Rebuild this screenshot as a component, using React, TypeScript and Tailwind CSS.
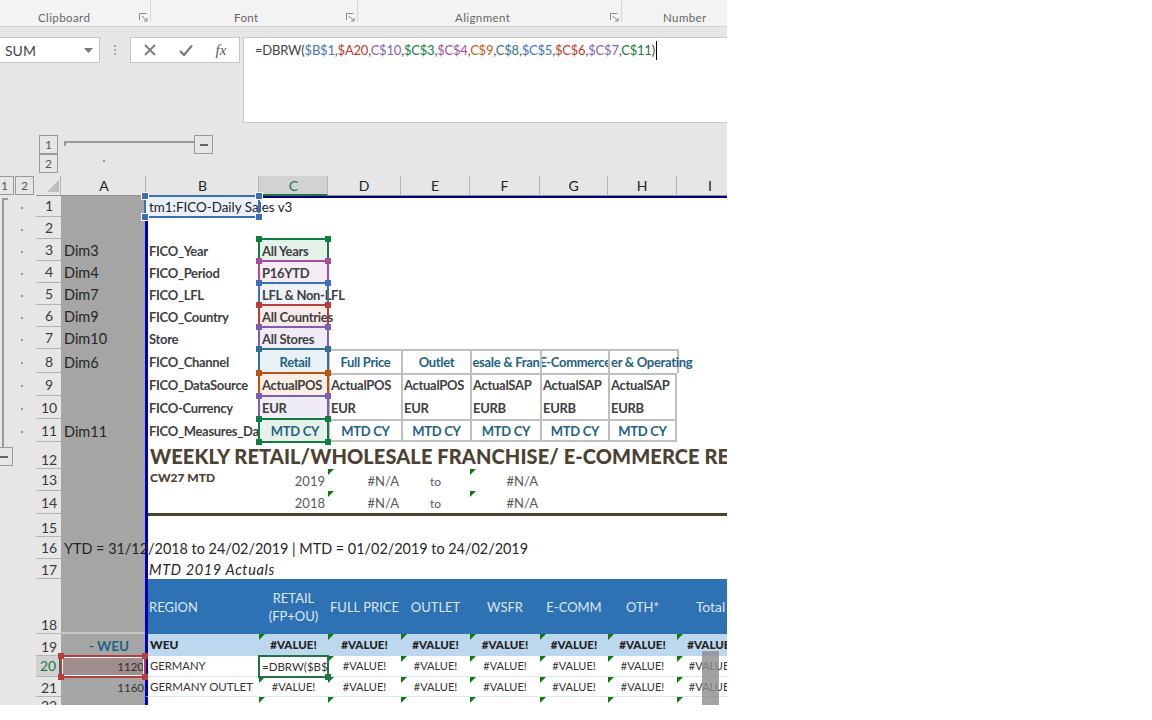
import React from "react";

const cal = "font-['Lato','Liberation_Sans',sans-serif]";
const goth = "font-['Lato','Liberation_Sans',sans-serif]";

function Sel({ border, handle, white }: { border: string; handle: string; white?: boolean }) {
  return (
    <div className={`pointer-events-none absolute -inset-[1px] z-20 border-2 ${border}`}>
      {white ? <span className="absolute inset-0 border border-white" /> : null}
      <span className={`absolute -left-[4px] -top-[4px] h-[6px] w-[6px] ${handle}`} />
      <span className={`absolute -right-[4px] -top-[4px] h-[6px] w-[6px] ${handle}`} />
      <span className={`absolute -bottom-[4px] -left-[4px] h-[6px] w-[6px] ${handle}`} />
      <span className={`absolute -bottom-[4px] -right-[4px] h-[6px] w-[6px] ${handle}`} />
    </div>
  );
}

function Tri() {
  return <svg className="absolute left-0 top-0 z-10" width="6" height="6"><path d="M0 0H6L0 6Z" fill="#0f7b0f" /></svg>;
}

function Launcher({ className }: { className?: string }) {
  return (
    <svg className={className} width="9" height="9" viewBox="0 0 9 9" fill="none">
      <path d="M0.5 7V0.5H7.5" stroke="#8a8a8a" />
      <path d="M3 3L7.5 7.5M5 8H8V5" stroke="#8a8a8a" />
    </svg>
  );
}

const RowNum = ({ n, active, low }: { n: number; active?: boolean; low?: boolean }) => (
  <div className={`flex items-end justify-center border-b border-[#b4b4b4] pl-[1px] text-[14px] ${low ? "leading-[16px]" : "pb-[1px] leading-[18px]"} ${active ? "border-r-2 border-r-[#217346] bg-[#d2d2d2] text-[#217346]" : "text-[#3c3c3c]"}`}>
    {n}
  </div>
);

const ColHead = ({ t, active, className = "" }: { t: string; active?: boolean; className?: string }) => (
  <div className={`flex items-center justify-center border-r border-[#b4b4b4] text-[14px] ${active ? "border-b-2 border-b-[#217346] bg-[#d2d2d2] text-[#217346]" : "border-b border-b-[#8f8f8f] text-[#222]"} ${className}`}>
    {t}
  </div>
);

const ACell = ({ t, className = "" }: { t?: string; className?: string }) => (
  <div className={`flex items-end overflow-visible whitespace-nowrap bg-[#a5a5a5] pl-[3px] text-[14.5px] leading-[20px] text-[#262626] ${goth} ${className}`}>{t}</div>
);

const BCell = ({ t, up, clip }: { t?: string; up?: boolean; clip?: boolean }) => (
  <div className={`flex items-end whitespace-nowrap border-l-[3px] border-[#0000bf] bg-white pl-[1px] text-[13px] font-bold leading-[18px] tracking-[-0.3px] text-[#404040] ${up ? "pb-[2px]" : "pb-[1px]"} ${clip ? "overflow-hidden" : ""} ${cal}`}>{t}</div>
);

const Blank = ({ className = "" }: { className?: string }) => <div className={`bg-white ${className}`} />;

const Input = ({ t, bg, border, handle, center, up }: { t: string; bg: string; border: string; handle: string; center?: boolean; up?: boolean }) => (
  <div className={`relative flex items-end overflow-visible whitespace-nowrap pl-[3px] text-[13px] font-bold leading-[18px] tracking-[-0.3px] ${up ? "pb-[2px]" : "pb-[1px]"} ${bg} ${cal} ${center ? "justify-center pl-0 text-[#1f6285]" : "text-[#404040]"}`}>
    {t}
    <Sel border={border} handle={handle} />
  </div>
);

const Head = ({ t, right, bottom }: { t: string; right?: boolean; bottom?: boolean }) => (
  <div className={`flex items-end justify-center overflow-hidden whitespace-nowrap border-t-2 border-l-2 border-[#bfbfbf] bg-white text-[13px] font-bold leading-[18px] tracking-[-0.3px] text-[#1f6285] ${bottom ? "border-b-2 pb-0" : "pb-[2px]"} ${cal} ${right ? "border-r-2" : ""}`}>
    {t}
  </div>
);

const Val = ({ t, r2, top }: { t: string; r2?: boolean; top?: boolean }) => (
  <div className={`flex items-end whitespace-nowrap border-l-2 border-[#bfbfbf] bg-white pb-[2px] pl-[1px] text-[13px] font-bold leading-[18px] tracking-[-0.3px] text-[#404040] ${cal} ${r2 ? "border-r-2" : ""} ${top ? "border-t-2" : ""}`}>{t}</div>
);

const Num = ({ t, bold, className = "" }: { t: string; bold?: boolean; className?: string }) => (
  <div className={`relative flex h-full items-center justify-center overflow-hidden whitespace-nowrap ${goth} ${bold ? "text-[11.5px] font-black text-[#222]" : "text-[11px] text-[#333]"} ${className}`}>
    <Tri />
    {t}
  </div>
);

const Small = ({ t, w, className = "" }: { t: string; w?: boolean; className?: string }) => (
  <div className={`relative flex items-end bg-white text-[13px] leading-[18px] text-[#595959] ${goth} ${className}`}>
    {w ? <Tri /> : null}
    {t}
  </div>
);

const Formula = () => {
  const parts: [string, string][] = [
    ["=DBRW(", "text-[#444]"], ["$B$1", "text-[#4472c4]"], [",", "text-[#444]"], ["$A20", "text-[#c0392b]"], [",", "text-[#444]"],
    ["C$10", "text-[#8064b4]"], [",", "text-[#444]"], ["$C$3", "text-[#107c41]"], [",", "text-[#444]"], ["$C$4", "text-[#a64d9e]"], [",", "text-[#444]"],
    ["C$9", "text-[#c55a11]"], [",", "text-[#444]"], ["C$8", "text-[#31708f]"], [",", "text-[#444]"], ["$C$5", "text-[#4472c4]"], [",", "text-[#444]"],
    ["$C$6", "text-[#c0392b]"], [",", "text-[#444]"], ["$C$7", "text-[#8064b4]"], [",", "text-[#444]"], ["C$11", "text-[#107c41]"], [")", "text-[#444]"],
  ];
  return (
    <span className="whitespace-nowrap">
      {parts.map(([t, c], i) => (
        <span key={i} className={c}>{t}</span>
      ))}
    </span>
  );
};

const OutBox = ({ t, className = "" }: { t: string; className?: string }) => (
  <div className={`flex h-[19px] w-[19px] items-center justify-center border border-[#9a9a9a] text-[12px] text-[#555] ${className}`}>{t}</div>
);

const Minus = ({ className = "" }: { className?: string }) => (
  <div className={`flex h-[19px] w-[19px] items-center justify-center border border-[#9a9a9a] ${className}`}>
    <span className="h-[2px] w-[8px] bg-[#666]" />
  </div>
);

const Group = ({ label, w, pad, launcher }: { label: string; w: string; pad: string; launcher?: boolean }) => (
  <div className={`relative flex h-[26px] items-end justify-start ${w} ${pad}`}>
    {label}
    {launcher ? <Launcher className="absolute bottom-[4px] right-[3px]" /> : null}
    {launcher ? <span className="absolute right-0 top-0 h-[22px] w-[1px] bg-[#d8d8d8]" /> : null}
  </div>
);

export default function App() {
  return (
    <div className={`h-[720px] w-[1152px] overflow-hidden bg-white ${cal}`}>
      <div className="flex h-[705px] w-[727px] flex-col overflow-hidden bg-[#e6e6e6]">
        {/* Ribbon */}
        <div className="flex h-[27px] shrink-0 border-b border-[#d0d0d0] bg-[#f3f3f3] text-[11.5px] leading-[16px] tracking-[0.4px] text-[#666]">
          <Group label="Clipboard" w="w-[151px]" pad="pl-[38px]" launcher />
          <Group label="Font" w="w-[207px]" pad="pl-[83px]" launcher />
          <Group label="Alignment" w="w-[264px]" pad="pl-[97px]" launcher />
          <Group label="Number" w="flex-1" pad="pl-[41px]" />
        </div>

        {/* Formula bar */}
        <div className="flex h-[96px] shrink-0 items-start pt-[10px]">
          <div className="flex h-[26px] w-[100px] items-center justify-between border border-l-0 border-[#c6c6c6] bg-white pl-[5px] pr-[6px] text-[14px] text-[#444]">
            SUM
            <svg width="9" height="5"><path d="M0 0H9L4.5 5Z" fill="#777" /></svg>
          </div>
          <div className="flex h-[26px] w-[30px] flex-col items-center justify-center gap-[2px]">
            <span className="h-[2px] w-[2px] bg-[#aaa]" />
            <span className="h-[2px] w-[2px] bg-[#aaa]" />
            <span className="h-[2px] w-[2px] bg-[#aaa]" />
          </div>
          <div className="flex h-[26px] w-[110px] items-center justify-around border border-[#c6c6c6] bg-white px-[1px]">
            <svg width="12" height="12" viewBox="0 0 12 12"><path d="M1 1L11 11M11 1L1 11" stroke="#7a7a7a" strokeWidth="1.8" /></svg>
            <svg width="14" height="12" viewBox="0 0 14 12"><path d="M1 7L5 11L13 1.5" stroke="#7a7a7a" strokeWidth="2.2" fill="none" /></svg>
            <span className="font-['Liberation_Serif',serif] text-[15px] italic text-[#555]">fx</span>
          </div>
          <div className="ml-[3px] h-[86px] flex-1 border border-r-0 border-[#c6c6c6] bg-white pl-[11px] text-[13px] tracking-[-0.2px]">
            <div className="flex h-[25px] items-center">
              <Formula />
              <span className="ml-[1px] h-[19px] w-[1px] bg-black" />
            </div>
          </div>
        </div>

        {/* Column outline */}
        <div className="relative flex h-[53px] shrink-0 items-start pl-[39px] pt-[12px]">
          <div className="flex flex-col gap-0">
            <OutBox t="1" />
            <OutBox t="2" />
          </div>
          <div className="ml-[6px] mt-[6px] h-[5px] w-[130px] border-l-2 border-t-2 border-[#9a9a9a]" />
          <Minus className="bg-[#e6e6e6]" />
          <span className="absolute left-[103px] top-[37px] h-[2px] w-[2px] bg-[#999]" />
        </div>

        {/* Sheet */}
        <div className="flex min-h-0 flex-1">
          {/* Row outline gutter */}
          <div className="relative w-[36px] shrink-0">
            <div className="flex h-[20px] items-start">
              <OutBox t="1" className="-ml-[5px] h-[18px]" />
              <OutBox t="2" className="ml-[1px] h-[18px] w-[18px]" />
            </div>
            <div className="absolute left-[2px] top-[22px] h-[249px] w-[6px] border-l-2 border-t-2 border-[#9a9a9a]" />
            <Minus className="absolute -left-[6px] top-[271px] bg-[#e6e6e6]" />
            {[31, 53, 75, 97, 119, 141, 163, 186, 209, 232, 255].map((y) => (
              <span key={y} className="absolute left-[21px] h-[2px] w-[2px] bg-[#999]" style={{ top: y }} />
            ))}
          </div>

          {/* Grid */}
          <div className="relative grid flex-1 grid-cols-[25px_84px_114px_69px_73px_69px_70px_68px_69px_67px] grid-rows-[20px_21px_22px_22px_22px_22px_22px_22px_24px_23px_23px_23px_27px_22px_23px_23px_22px_20px_55px_22px_21px_20px_8px] overflow-hidden">
            {/* Column headers */}
            <div className="relative border-b border-[#8f8f8f] border-r border-r-[#b4b4b4]">
              <svg className="absolute bottom-[3px] right-[1px]" width="12" height="12"><path d="M12 0V12H0Z" fill="#bdbdbd" /></svg>
            </div>
            <ColHead t="A" className="-mr-[1px] pl-[2px]" />
            <ColHead t="B" className="pl-[2px]" />
            <ColHead t="C" active className="pl-[1px]" />
            <ColHead t="D" />
            <ColHead t="E" />
            <ColHead t="F" />
            <ColHead t="G" />
            <ColHead t="H" />
            <ColHead t="I" />

            {/* 1 */}
            <RowNum n={1} />
            <ACell />
            <div className={`relative z-10 flex items-center whitespace-nowrap bg-[#e9f0fa] pl-[4px] text-[13.4px] leading-[18px] text-[#222] ${cal}`}>
              tm1:FICO-Daily Sales v3
              <Sel border="border-[#3c6eb4]" handle="bg-[#3c6eb4] outline outline-1 outline-white" />
            </div>
            <Blank className="col-span-7 border-t-2 border-[#000080]" />

            {/* 2 */}
            <RowNum n={2} />
            <ACell />
            <BCell />
            <Blank className="col-span-7" />

            {/* 3 */}
            <RowNum n={3} />
            <ACell t="Dim3" />
            <BCell t="FICO_Year" />
            <Input t="All Years" bg="bg-[#e5f2ea]" border="border-[#107c41]" handle="bg-[#107c41]" />
            <Blank className="col-span-6" />

            {/* 4 */}
            <RowNum n={4} />
            <ACell t="Dim4" />
            <BCell t="FICO_Period" />
            <Input t="P16YTD" bg="bg-[#f6ecf5]" border="border-[#a64d9e]" handle="bg-[#a64d9e]" />
            <Blank className="col-span-6" />

            {/* 5 */}
            <RowNum n={5} />
            <ACell t="Dim7" />
            <BCell t="FICO_LFL" />
            <Input t="LFL & Non-LFL" bg="bg-[#edf2fa]" border="border-[#3f6fba]" handle="bg-[#3f6fba]" />
            <Blank className="col-span-6" />

            {/* 6 */}
            <RowNum n={6} />
            <ACell t="Dim9" />
            <BCell t="FICO_Country" />
            <Input t="All Countries" bg="bg-[#f9eaea]" border="border-[#b83d3d]" handle="bg-[#b83d3d]" />
            <Blank className="col-span-6" />

            {/* 7 */}
            <RowNum n={7} />
            <ACell t="Dim10" />
            <BCell t="Store" />
            <Input t="All Stores" bg="bg-[#f0ecf7]" border="border-[#7c5fae]" handle="bg-[#7c5fae]" />
            <Blank className="col-span-6" />

            {/* 8 */}
            <RowNum n={8} />
            <ACell t="Dim6" />
            <BCell t="FICO_Channel" up />
            <Input t="Retail" bg="bg-[#e8f1f5]" border="border-[#31708f]" handle="bg-[#31708f]" center up />
            <Head t="Full Price" />
            <Head t="Outlet" />
            <Head t="esale & Fran" />
            <Head t="E-Commerce" />
            <div className={`relative z-10 flex items-end whitespace-nowrap border-t-2 border-l-2 border-[#bfbfbf] bg-white pb-[2px] pl-[1px] text-[13px] font-bold leading-[18px] tracking-[-0.3px] text-[#1f6285] ${cal}`}>er &amp; Operating</div>
            <Blank className="border-l-2 border-[#bfbfbf]" />

            {/* 9 */}
            <RowNum n={9} />
            <ACell />
            <BCell t="FICO_DataSource" up />
            <Input t="ActualPOS" bg="bg-[#fbeee5]" border="border-[#b85410]" handle="bg-[#b85410]" up />
            <Val t="ActualPOS" top />
            <Val t="ActualPOS" top />
            <Val t="ActualSAP" top />
            <Val t="ActualSAP" top />
            <Val t="ActualSAP" top r2 />
            <Blank />

            {/* 10 */}
            <RowNum n={10} />
            <ACell />
            <BCell t="FICO-Currency" up />
            <Input t="EUR" bg="bg-[#f0ecf7]" border="border-[#7c5fae]" handle="bg-[#7c5fae]" up />
            <Val t="EUR" />
            <Val t="EUR" />
            <Val t="EURB" />
            <Val t="EURB" />
            <Val t="EURB" r2 />
            <Blank />

            {/* 11 */}
            <RowNum n={11} />
            <ACell t="Dim11" />
            <BCell t="FICO_Measures_Data" up clip />
            <Input t="MTD CY" bg="bg-[#e5f2ea]" border="border-[#107c41]" handle="bg-[#107c41]" center up />
            <Head t="MTD CY" bottom />
            <Head t="MTD CY" bottom />
            <Head t="MTD CY" bottom />
            <Head t="MTD CY" bottom />
            <Head t="MTD CY" bottom right />
            <Blank />

            {/* 12 */}
            <RowNum n={12} low />
            <ACell />
            <div className={`col-span-8 flex items-end overflow-hidden whitespace-nowrap border-l-[3px] border-[#0000bf] bg-white pl-[2px] text-[20px] font-black leading-[26px] tracking-[0.1px] text-[#4b4232] ${goth}`}>WEEKLY RETAIL/WHOLESALE FRANCHISE/ E-COMMERCE REPORT</div>

            {/* 13 */}
            <RowNum n={13} />
            <ACell />
            <div className={`flex items-start whitespace-nowrap border-l-[3px] border-[#0000bf] bg-white pl-[2px] pt-[1px] text-[12px] font-black leading-[16px] text-[#4b4232] ${goth}`}>CW27 MTD</div>
            <Small t="2019" className="justify-end pb-[1px] pr-[3px]" />
            <Small t="#N/A" w className="justify-end pb-[1px] pr-[2px]" />
            <Small t="to" className="justify-center !text-[12px]" />
            <Small t="#N/A" w className="justify-end pb-[1px] pr-[2px]" />
            <Blank className="col-span-3" />

            {/* 14 */}
            <RowNum n={14} />
            <ACell />
            <BCell />
            <Small t="2018" className="justify-end pb-[2px] pr-[3px]" />
            <Small t="#N/A" w className="justify-end pb-[2px] pr-[2px]" />
            <Small t="to" className="justify-center pb-[1px] !text-[12px]" />
            <Small t="#N/A" w className="justify-end pb-[2px] pr-[2px]" />
            <Blank className="col-span-3" />

            {/* 15 */}
            <RowNum n={15} low />
            <ACell />
            <div className="col-span-8 border-l-[3px] border-[#0000bf] bg-white">
              <div className="relative -mt-[1px] h-[3px] bg-[#4b4232]" />
            </div>

            {/* 16 */}
            <RowNum n={16} />
            <ACell t="YTD = 31/12/2018 to 24/02/2019  |  MTD = 01/02/2019 to 24/02/2019" className="relative z-10 !bg-transparent !text-[14.4px]" />
            <div className="col-span-8 -ml-[84px] bg-[linear-gradient(to_right,#a5a5a5_84px,#0000bf_84px,#0000bf_87px,#ffffff_87px)]" />

            {/* 17 */}
            <RowNum n={17} low />
            <ACell />
            <div className={`col-span-8 flex items-end whitespace-nowrap border-l-[3px] border-[#0000bf] bg-white pl-[1px] text-[14.5px] italic leading-[18px] tracking-[0.65px] text-[#262626] ${goth}`}>MTD 2019 Actuals</div>

            {/* 18 */}
            <RowNum n={18} low />
            <ACell className="border-b-2 border-[#c4c4c4]" />
            <div className={`col-span-8 grid grid-cols-[111px_69px_73px_69px_70px_68px_69px_67px] border-l-[3px] border-[#0000bf] bg-[#2e72b4] text-[13px] leading-[18px] text-[#dbe7f3] ${goth}`}>
              <div className="flex items-center pl-[1px]">REGION</div>
              <div className="flex items-center justify-center text-center">RETAIL<br />(FP+OU)</div>
              <div className="flex items-center justify-center">FULL PRICE</div>
              <div className="flex items-center justify-center">OUTLET</div>
              <div className="flex items-center justify-center">WSFR</div>
              <div className="flex items-center justify-center">E-COMM</div>
              <div className="flex items-center justify-center">OTH*</div>
              <div className="flex items-center justify-center text-[14px]">Total</div>
            </div>

            {/* 19 */}
            <RowNum n={19} low />
            <ACell t="- WEU" className="justify-center pl-[12px] !text-[13.5px] !text-[#1f6285] font-bold" />
            <div className={`flex items-center border-l-[3px] border-[#0000bf] bg-[#bdd7ee] pl-[2px] text-[12px] font-black text-[#222] ${goth}`}>WEU</div>
            {["C", "D", "E", "F", "G", "H", "I"].map((k) => (
              <div key={k} className="bg-[#bdd7ee]"><Num t="#VALUE!" bold /></div>
            ))}

            {/* 20 */}
            <RowNum n={20} active />
            <div className={`relative flex items-center justify-end bg-[#a08d8d] pr-[1px] text-[11.5px] text-[#333] ${goth}`}>
              1120
              <Sel border="border-[#b83d3d]" handle="bg-[#b83d3d]" white />
            </div>
            <div className={`flex items-center border-b border-l-[3px] border-b-[#d5e6f4] border-l-[#0000bf] bg-white pl-[2px] pt-[1px] text-[11.3px] text-[#333] ${goth}`}>GERMANY</div>
            <div className={`relative flex items-center overflow-visible whitespace-nowrap bg-white pl-[3px] pt-[1px] text-[11.5px] text-[#333] ${goth}`}>
              <span className="w-[65px] overflow-hidden">=DBRW($B$1</span>
              <span className="absolute -inset-[1px] z-20 border-2 border-[#217346]" />
              <span className="absolute -bottom-[3px] -right-[3px] z-30 h-[6px] w-[6px] bg-[#217346]" />
            </div>
            {["D", "E", "F", "G", "H", "I"].map((k) => <div key={k} className="border-b border-[#d5e6f4] bg-white"><Num t="#VALUE!" className="pt-[1px]" /></div>)}

            {/* 21 */}
            <RowNum n={21} low />
            <div className={`flex items-center justify-end bg-[#a5a5a5] pr-[1px] pt-[1px] text-[11.5px] text-[#333] ${goth}`}>1160</div>
            <div className={`flex items-center border-b border-l-[3px] border-b-[#d5e6f4] border-l-[#0000bf] bg-white pl-[2px] pt-[1px] text-[11.5px] text-[#333] ${goth}`}>GERMANY OUTLET</div>
            {["C", "D", "E", "F", "G", "H", "I"].map((k) => <div key={k} className="border-b border-[#d5e6f4] bg-white"><Num t="#VALUE!" className="pt-[2px]" /></div>)}

            {/* 22 */}
            <div className="flex justify-center overflow-hidden pl-[1px] text-[14px] leading-[18px] text-[#3c3c3c]">22</div>
            <ACell />
            <div className="border-l-[3px] border-[#0000bf] bg-white" />
            {["C", "D", "E", "F", "G", "H", "I"].map((k) => <div key={k} className="relative bg-white"><Tri /></div>)}

            {/* Grey block lying over column I */}
            <div className="absolute bottom-0 right-[8px] z-10 h-[54px] w-[17px] bg-[#8c8c8c]/80" />
          </div>
        </div>
      </div>
    </div>
  );
}
